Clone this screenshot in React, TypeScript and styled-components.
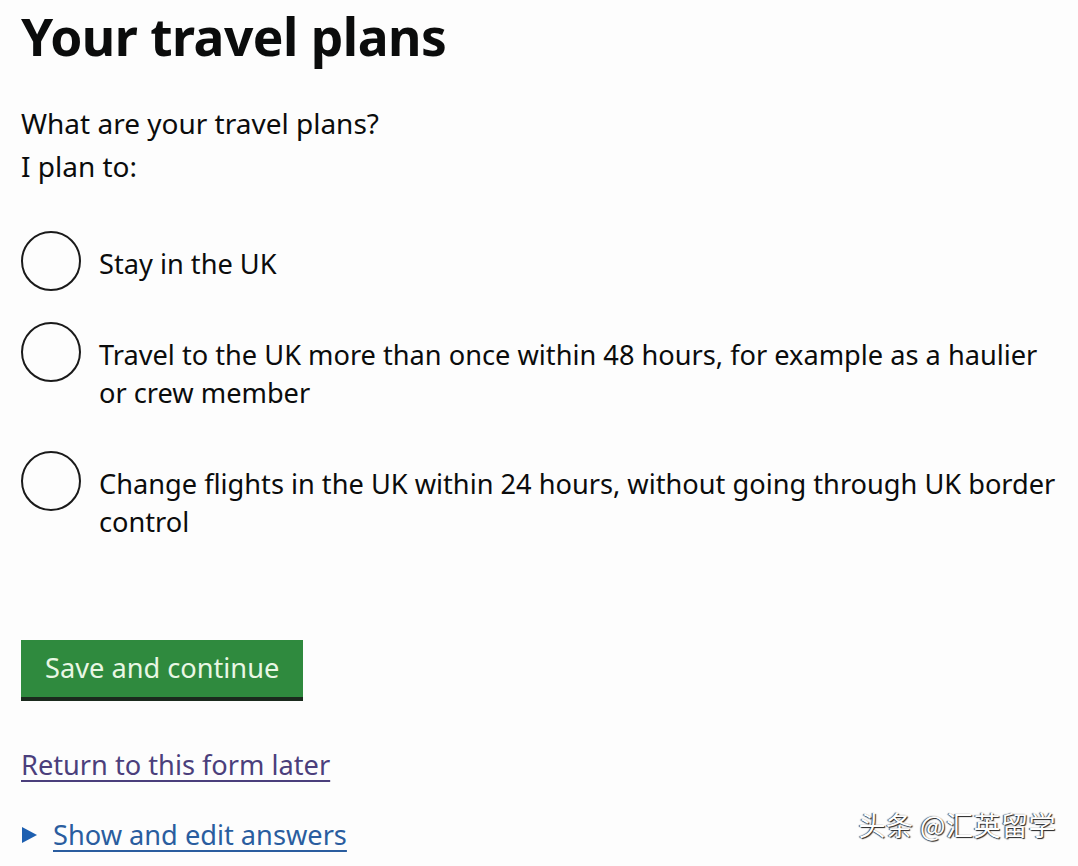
import React from 'react';
import styled, { createGlobalStyle } from 'styled-components';

const GlobalStyle = createGlobalStyle`
  html, body {
    margin: 0;
    padding: 0;
    background: #fdfdfd;
  }
  body {
    font-family: "Noto Sans", "Liberation Sans", Arial, sans-serif;
    color: #0b0c0c;
  }
`;

const Page = styled.main`
  position: relative;
  width: 1078px;
  height: 866px;
  padding: 0 0 0 21px;
  box-sizing: border-box;
  overflow: hidden;
`;

const Title = styled.h1`
  margin: 0;
  padding-top: 1px;
  font-size: 51.5px;
  line-height: 70px;
  font-weight: 700;
  letter-spacing: -0.5px;
`;

const Fieldset = styled.fieldset`
  margin: 31px 0 0;
  padding: 0;
  border: 0;
`;

const Legend = styled.legend`
  padding: 0;
  font-size: 28px;
  line-height: 43px;
`;

const Options = styled.div`
  display: flex;
  flex-direction: column;
  gap: 53px;
  margin-top: 57px;
`;

const Option = styled.label`
  display: flex;
  align-items: flex-start;
  gap: 18px;
  font-size: 27.2px;
  line-height: 38px;
`;

const Circle = styled.span`
  flex: none;
  box-sizing: border-box;
  width: 60px;
  height: 60px;
  margin: -14px 0 -8px;
  border: 2.5px solid #1a1a1a;
  border-radius: 50%;
`;

const OptionText = styled.span`
  max-width: 962px;
`;

const Button = styled.button`
  display: block;
  margin-top: 99px;
  padding: 0 24px 2px;
  height: 57px;
  background: #2f8a3e;
  border: 0;
  box-shadow: 0 4px 0 #1b2a1d;
  color: #e9f7e4;
  font-family: inherit;
  font-size: 27.2px;
  line-height: 55px;
`;

const Link = styled.a<{ $visited?: boolean }>`
  color: ${({ $visited }) => ($visited ? '#4b3f7c' : '#2a5d9f')};
  text-decoration: underline;
  text-underline-offset: 5px;
  text-decoration-thickness: 2px;
  font-size: 27.2px;
  line-height: 36px;
`;

const ReturnRow = styled.div`
  margin-top: 50px;
`;

const Details = styled.div`
  display: flex;
  align-items: center;
  gap: 16px;
  margin-top: 34px;
`;

const Arrow = styled.span`
  width: 0;
  height: 0;
  margin-left: 1px;
  border-top: 8px solid transparent;
  border-bottom: 8px solid transparent;
  border-left: 15px solid #1d5fb0;
`;

const Watermark = styled.div`
  position: absolute;
  right: 22px;
  bottom: 22px;
  font-family: "Noto Sans CJK SC", sans-serif;
  font-size: 27px;
  color: #ffffff;
  text-shadow: 1px 1px 1px #222, -1px 0 1px #444;
  letter-spacing: 0.5px;
`;

const options = [
  'Stay in the UK',
  'Travel to the UK more than once within 48 hours, for example as a haulier or crew member',
  'Change flights in the UK within 24 hours, without going through UK border control',
];

export default function App() {
  return (
    <>
      <GlobalStyle />
      <Page>
        <Title>Your travel plans</Title>
        <Fieldset>
          <Legend>
            What are your travel plans?
            <br />I plan to:
          </Legend>
          <Options>
            {options.map((label) => (
              <Option key={label}>
                <Circle />
                <OptionText>{label}</OptionText>
              </Option>
            ))}
          </Options>
        </Fieldset>
        <Button>Save and continue</Button>
        <ReturnRow>
          <Link $visited href="#">Return to this form later</Link>
        </ReturnRow>
        <Details>
          <Arrow />
          <Link href="#">Show and edit answers</Link>
        </Details>
        <Watermark>头条 @汇英留学</Watermark>
      </Page>
    </>
  );
}
